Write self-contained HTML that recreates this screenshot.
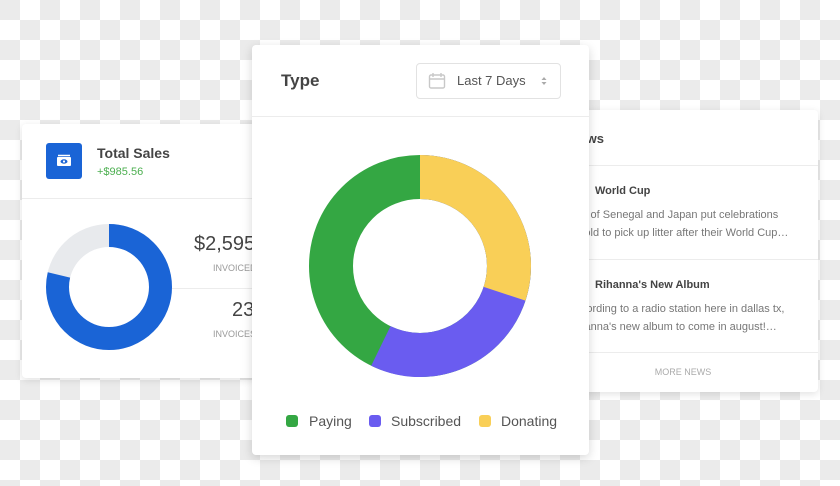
<!DOCTYPE html>
<html><head><style>
body{margin:0;width:840px;height:486px;overflow:hidden;position:relative;font-family:"Liberation Sans",sans-serif;
background-color:#fff;background-image:linear-gradient(45deg,#ebebeb 25%,transparent 25%,transparent 75%,#ebebeb 75%),linear-gradient(45deg,#ebebeb 25%,transparent 25%,transparent 75%,#ebebeb 75%);background-size:40px 40px;background-position:20px 0,0 20px;}
.card{position:absolute;background:#fff;border-radius:4px;box-shadow:0 2px 8px rgba(0,0,0,.12);overflow:hidden}
.abs{position:absolute;white-space:nowrap}
.hr{position:absolute;height:1px;background:#ececec}
</style></head><body>
<div class="card" style="left:22px;top:124px;width:236px;height:254px">
  <div class="abs" style="left:24px;top:19px;width:36px;height:36px;background:#1a64d6;border-radius:3px">
    <svg width="36" height="36" viewBox="0 0 36 36"><rect x="11" y="14" width="14" height="9" rx="1" fill="#fff"/><path d="M12 12.5h12" stroke="#fff" stroke-width="1.5"/><ellipse cx="18" cy="18.5" rx="3.5" ry="2.2" fill="#1a64d6"/><circle cx="18" cy="18.5" r="1.1" fill="#fff"/></svg>
  </div>
  <div class="abs" style="left:75px;top:21px;font-size:14px;font-weight:bold;color:#444">Total Sales</div>
  <div class="abs" style="left:75px;top:42px;font-size:11px;color:#4caf50">+$985.56</div>
  <div class="hr" style="left:0;right:0;top:74px"></div>
  <svg class="abs" style="left:24px;top:100px" width="126" height="126" viewBox="0 0 126 126">
    <circle cx="63" cy="63" r="51.5" fill="none" stroke="#e8eaed" stroke-width="23"/>
    <circle cx="63" cy="63" r="51.5" fill="none" stroke="#1a64d6" stroke-width="23" stroke-dasharray="254.6 400" transform="rotate(-90 63 63)"/>
  </svg>
  <div class="abs" style="left:172px;top:109px;font-size:20px;color:#444">$2,595</div>
  <div class="abs" style="left:191px;top:139px;font-size:9px;color:#999">INVOICED</div>
  <div class="hr" style="left:150px;right:0;top:164px"></div>
  <div class="abs" style="left:210px;top:175px;font-size:20px;color:#444">23</div>
  <div class="abs" style="left:191px;top:205px;font-size:9px;color:#999">INVOICES</div>
</div>
<div class="card" style="left:585px;top:110px;width:233px;height:282px">
  <div class="abs" style="left:-15px;top:21px;font-size:13px;font-weight:bold;color:#444">News</div>
  <div class="hr" style="left:0;right:0;top:55px"></div>
  <div class="abs" style="left:10px;top:75px;font-size:11px;font-weight:bold;color:#444">World Cup</div>
  <div class="abs" style="left:-22px;top:96px;font-size:11px;color:#777;line-height:18px">Fans of Senegal and Japan put celebrations<br>on hold to pick up litter after their World Cup…</div>
  <div class="hr" style="left:0;right:0;top:149px"></div>
  <div class="abs" style="left:10px;top:169px;font-size:11px;font-weight:bold;color:#444">Rihanna's New Album</div>
  <div class="abs" style="left:-17px;top:190px;font-size:11px;color:#777;line-height:18px">According to a radio station here in dallas tx,<br>Rihanna's new album to come in august!…</div>
  <div class="hr" style="left:0;right:0;top:242px"></div>
  <div class="abs" style="left:0;width:196px;text-align:center;top:257px;font-size:9px;color:#aaa">MORE NEWS</div>
</div>
<div class="card" style="left:252px;top:45px;width:337px;height:410px;box-shadow:0 3px 10px rgba(0,0,0,.16)">
  <div class="abs" style="left:29px;top:26px;font-size:17px;font-weight:bold;color:#444">Type</div>
  <div class="abs" style="left:164px;top:18px;width:143px;height:34px;border:1px solid #e2e2e2;border-radius:4px">
    <svg class="abs" style="left:11px;top:8px" width="18" height="18" viewBox="0 0 18 18" fill="none" stroke="#c8c8c8" stroke-width="1.4"><rect x="1.5" y="3" width="15" height="13" rx="1.5"/><path d="M1.5 7h15M5 1v4M13 1v4"/></svg>
    <div class="abs" style="left:40px;top:9px;font-size:13px;color:#555">Last 7 Days</div>
    <svg class="abs" style="left:123px;top:12px" width="8" height="10" viewBox="0 0 8 10" fill="#aaa"><path d="M4 1L6.5 4h-5zM4 9L1.5 6h5z"/></svg>
  </div>
  <div class="hr" style="left:0;right:0;top:71px"></div>
  <svg class="abs" style="left:57px;top:110px" width="222" height="222" viewBox="0 0 222 222">
    <g transform="rotate(-90 111 111)" fill="none" stroke-width="44">
      <circle cx="111" cy="111" r="89" stroke="#34a743" stroke-dasharray="559.2 600"/>
      <circle cx="111" cy="111" r="89" stroke="#6a5cf0" stroke-dasharray="320 600"/>
      <circle cx="111" cy="111" r="89" stroke="#f9cf57" stroke-dasharray="168 600"/>
    </g>
  </svg>
  <div class="abs" style="left:34px;top:370px;width:12px;height:12px;border-radius:3px;background:#34a743"></div>
  <div class="abs" style="left:57px;top:368px;font-size:14px;color:#555">Paying</div>
  <div class="abs" style="left:117px;top:370px;width:12px;height:12px;border-radius:3px;background:#6a5cf0"></div>
  <div class="abs" style="left:139px;top:368px;font-size:14px;color:#555">Subscribed</div>
  <div class="abs" style="left:227px;top:370px;width:12px;height:12px;border-radius:3px;background:#f9cf57"></div>
  <div class="abs" style="left:249px;top:368px;font-size:14px;color:#555">Donating</div>
</div>
</body></html>
